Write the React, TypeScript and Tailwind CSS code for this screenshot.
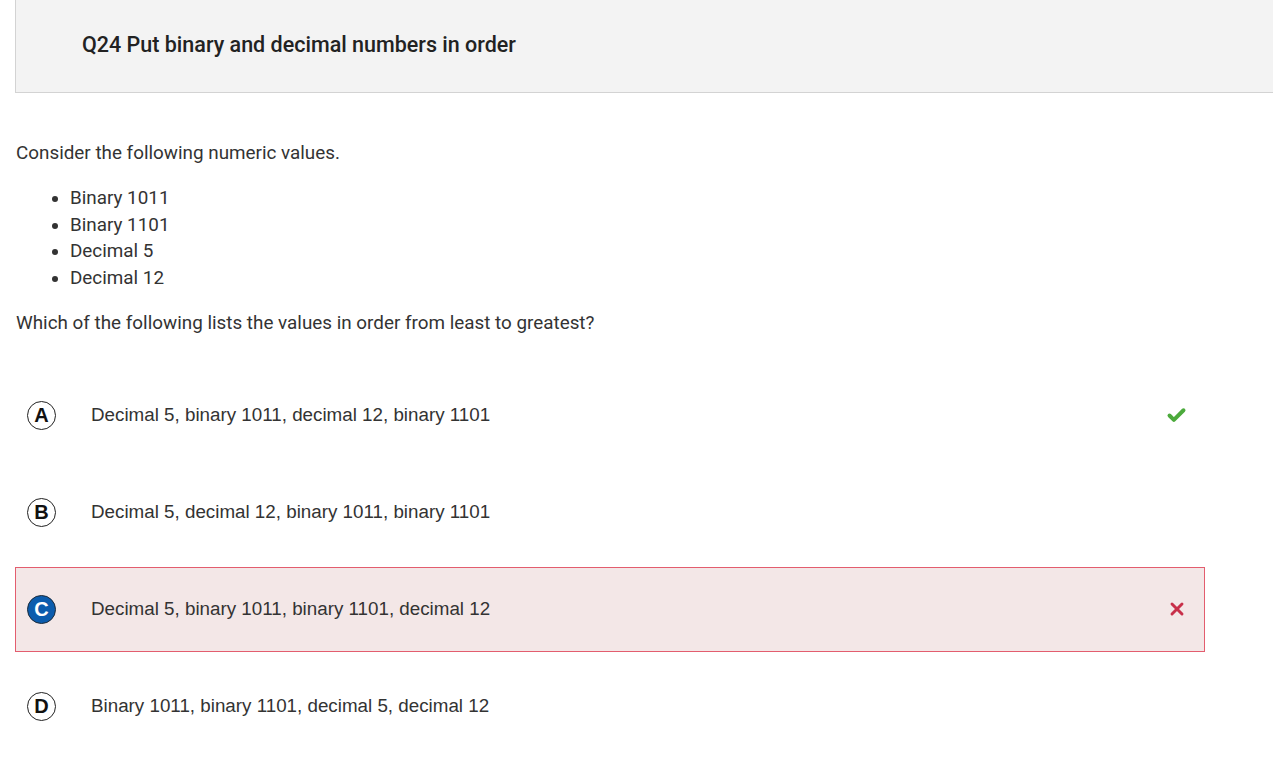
import { Check, X } from "lucide-react";

type Choice = { letter: string; text: string; state?: "correct" | "wrong" };

const choices: Choice[] = [
	{ letter: "A", text: "Decimal 5, binary 1011, decimal 12, binary 1101", state: "correct" },
	{ letter: "B", text: "Decimal 5, decimal 12, binary 1011, binary 1101" },
	{ letter: "C", text: "Decimal 5, binary 1011, binary 1101, decimal 12", state: "wrong" },
	{ letter: "D", text: "Binary 1011, binary 1101, decimal 5, decimal 12" },
];

const values = ["Binary 1011", "Binary 1101", "Decimal 5", "Decimal 12"];

export default function App() {
	return (
		<div className="min-h-screen bg-white font-['Roboto',sans-serif] text-[#333]">
			<div className="ml-[15px] flex h-[93px] items-center border-b border-l border-[#d3d3d3] bg-[#f3f3f3] pl-[66px] pb-[2px]">
				<h1 className="text-[21.5px] font-medium text-[#222]">Q24 Put binary and decimal numbers in order</h1>
			</div>
			<div className="pl-4 text-[18.85px]">
				<p className="mt-[47px] leading-[27px]">Consider the following numeric values.</p>
				<ul className="mt-[18px] list-disc pl-[54px] leading-[26.67px] marker:text-[#333]">
					{values.map((v) => (
						<li key={v}>{v}</li>
					))}
				</ul>
				<p className="mt-[18px] leading-[27px]">Which of the following lists the values in order from least to greatest?</p>
			</div>
			<div className="mt-[36px] ml-[15px] flex w-[1190px] flex-col gap-[12px] font-['Liberation_Sans',Arial,sans-serif]">
				{choices.map((c) => (
					<div
						key={c.letter}
						className={
							c.state === "wrong"
								? "flex h-[85px] items-center border border-[#e35d6e] bg-[#f3e7e7] pl-[11px] pr-[17px]"
								: "flex h-[85px] items-center border border-transparent pl-[11px] pr-[17px]"
						}
					>
						<span
							className={
								c.state === "wrong"
									? "flex h-[29px] w-[29px] items-center justify-center rounded-full border border-[#1d2b3a] bg-[#0b5cad] text-[20px] font-bold text-white"
									: "flex h-[29px] w-[29px] items-center justify-center rounded-full border border-[#222] text-[20px] font-bold text-[#111]"
							}
						>
							{c.letter}
						</span>
						<span className="ml-[35px] flex-1 text-[18.8px] text-[#333]">{c.text}</span>
						{c.state === "correct" && <Check className="h-[21px] w-[21px] text-[#4caa3c]" strokeWidth={4.5} />}
						{c.state === "wrong" && <X className="h-[20px] w-[20px] text-[#c8304a]" strokeWidth={3.5} />}
					</div>
				))}
			</div>
		</div>
	);
}
